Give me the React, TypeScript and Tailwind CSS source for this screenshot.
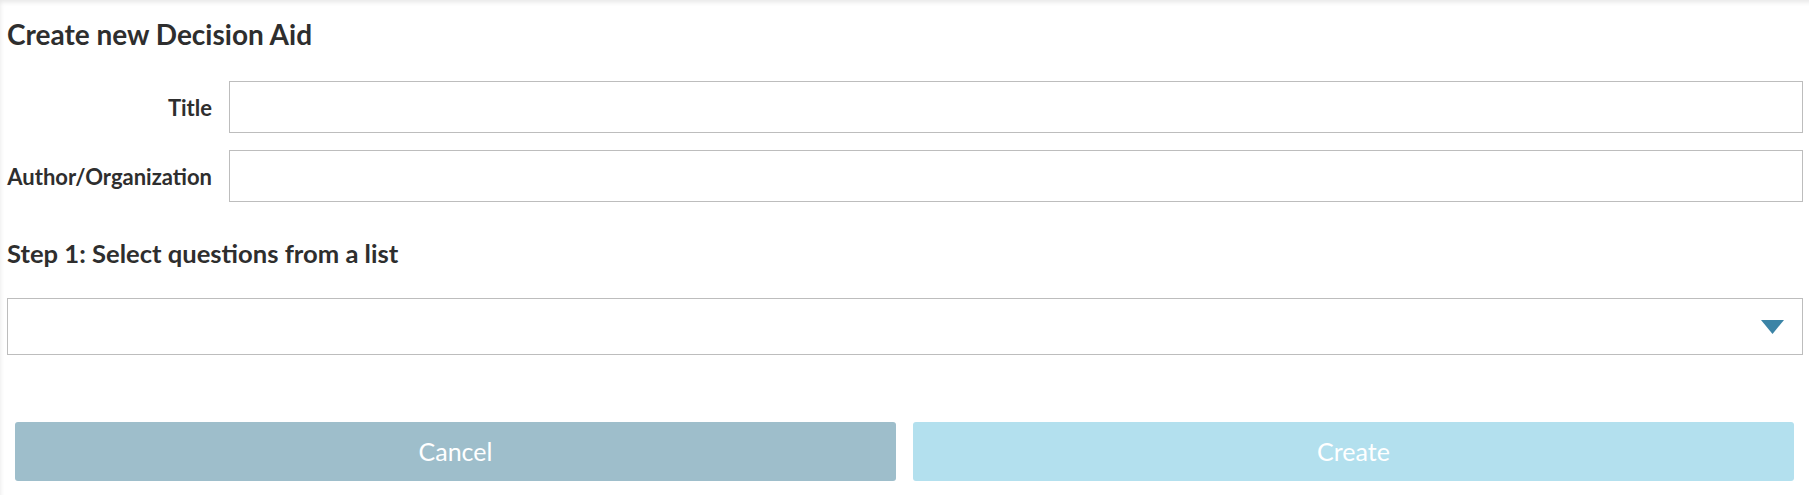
export default function App() {
  return (
    <div className="min-h-screen bg-white font-['Lato','Liberation_Sans',sans-serif] text-[#2e2e2e] shadow-[inset_3px_5px_5px_-3px_rgba(0,0,0,0.1)]">
      <div className="pl-[7px] pr-[6px] pt-[18px]">
        <h1 className="text-[28px] font-bold leading-[32px]">Create new Decision Aid</h1>

        <div className="mt-[31px] flex flex-col gap-[17px]">
          <div className="flex items-center gap-[17px]">
            <label className="w-[205px] text-right text-[22px] font-bold">Title</label>
            <input className="h-[52px] flex-1 border border-[#bdbdbd] px-3 outline-none" />
          </div>
          <div className="flex items-center gap-[17px]">
            <label className="w-[205px] text-right text-[22px] font-bold">Author/Organization</label>
            <input className="h-[52px] flex-1 border border-[#bdbdbd] px-3 outline-none" />
          </div>
        </div>

        <h2 className="mt-[36px] text-[25.6px] font-bold leading-[30px]">Step 1: Select questions from a list</h2>

        <div className="mt-[30px] flex h-[57px] items-center justify-end border border-[#bdbdbd] pr-[18px]">
          <svg width="23" height="14" viewBox="0 0 23 14">
            <path d="M0 0 H23 L11.5 14 Z" fill="#3b84a6" />
          </svg>
        </div>
      </div>

      <div className="mt-[67px] flex gap-[17px] px-[15px]">
        <button className="h-[59px] flex-1 rounded-[3px] bg-[#9ebecb] text-[25px] text-white">Cancel</button>
        <button className="h-[59px] flex-1 rounded-[3px] bg-[#b3e0ee] text-[25px] text-white">Create</button>
      </div>
    </div>
  );
}
